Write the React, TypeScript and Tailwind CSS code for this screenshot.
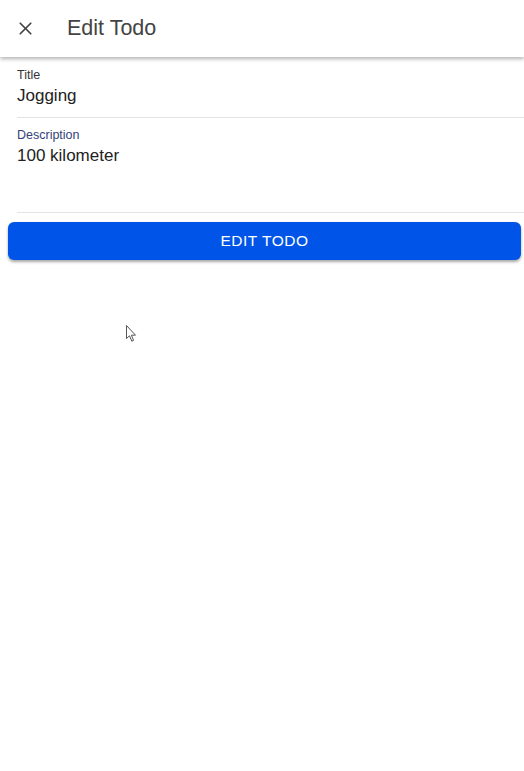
import { X } from "lucide-react";

const Field = ({ label, value, focused, tall }: { label: string; value: string; focused?: boolean; tall?: boolean }) => (
  <div className={`ml-[17px] border-b border-[#e4e4e4] ${tall ? "h-[95px] pt-[9px]" : "h-[57px] pt-[6px]"}`}>
    <div className={`text-[12.5px] leading-[16px] ${focused ? "text-[#34427a]" : "text-[#333]"}`}>{label}</div>
    <div className="text-[17px] leading-[22px] text-[#222] mt-[2px]">{value}</div>
  </div>
);

const App = () => {
  return (
    <div className="relative min-h-[771px] bg-white font-['Liberation_Sans',Arial,sans-serif]">
      <header className="h-[57px] flex items-center bg-white shadow-[0_2px_4px_rgba(0,0,0,0.3)]">
        <div className="w-[67px] flex items-center pl-[15px]">
          <X size={21} strokeWidth={2} className="text-[#444]" />
        </div>
        <h1 className="text-[21.5px] text-[#444] font-normal">Edit Todo</h1>
      </header>

      <div className="pt-[4px]">
        <Field label="Title" value="Jogging" />
        <Field label="Description" value="100 kilometer" focused tall />
      </div>

      <div className="px-[8px] pt-[9px] pr-[3px]">
        <button className="w-full h-[38px] rounded-[6px] bg-[#0055e8] text-white text-[15.5px] tracking-[0.5px] shadow-[0_2px_3px_rgba(0,0,0,0.35)]">
          EDIT TODO
        </button>
      </div>

      <svg className="absolute left-[126px] top-[325px]" width="12" height="18" viewBox="0 0 12 18">
        <path d="M0.5 0.5 L0.5 13.5 L3.5 10.8 L5.8 16.2 L7.6 15.4 L5.4 10.2 L9.5 10.2 Z" fill="white" stroke="#555" strokeWidth="1" strokeLinejoin="round" />
      </svg>
    </div>
  );
};

export default App;
